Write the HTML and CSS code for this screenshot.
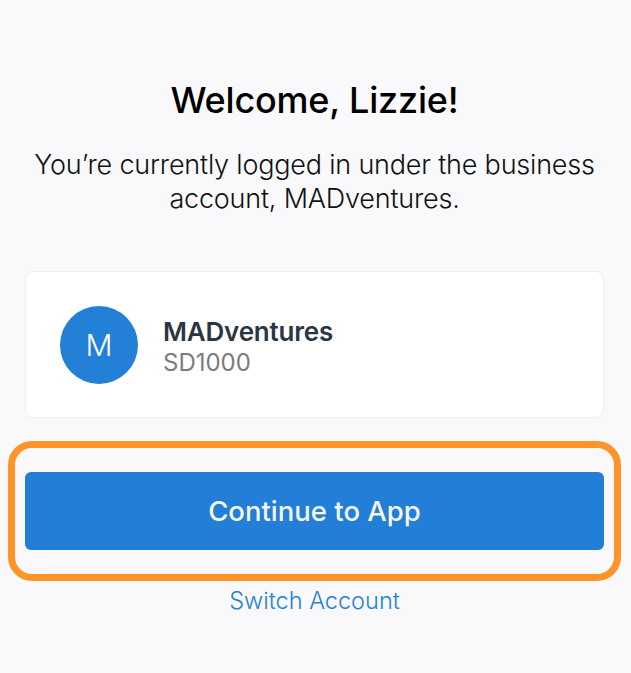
FILE: index.html
```html
<!DOCTYPE html>
<html>
    <head>
        <title>Welcome</title>
        <meta charset="utf-8" />
        <meta name="viewport" content="width=device-width, initial-scale=1" />
        <link rel="stylesheet" href="styles.css">
    </head>
    <body>
        <div class="screen">
            <h1 class="title">Welcome, Lizzie!</h1>
            <p class="intro">
                You’re currently logged in under the business account, MADventures.
            </p>
            <div class="account-card">
                <div class="avatar">M</div>
                <div class="account-info">
                    <div class="account-name">MADventures</div>
                    <div class="account-id">SD1000</div>
                </div>
            </div>
            <div class="highlight">
                <button class="primary-btn">Continue to App</button>
            </div>
            <a class="switch-link" href="#">Switch Account</a>
        </div>
    </body>
</html>
```

FILE: styles.css
```css
html,
body {
    margin: 0;
    padding: 0;
    background-color: #f9f9fb;
    font-family: Inter, 'Liberation Sans', Arial, sans-serif;
}

.screen {
    padding: 78px 27px 0 25px;
    display: flex;
    flex-direction: column;
}

.title {
    margin: 0;
    text-align: center;
    font-size: 36px;
    font-weight: 500;
    color: #000;
    letter-spacing: -0.2px;
}

.intro {
    margin: 26px 0 0;
    text-align: center;
    font-size: 27px;
    font-weight: 300;
    line-height: 34px;
    color: #111;
    letter-spacing: -0.2px;
}

.account-card {
    margin-top: 55px;
    height: 145px;
    background-color: #fff;
    border: 1px solid #eeeef2;
    border-radius: 8px;
    display: flex;
    align-items: center;
    padding-left: 34px;
    gap: 25px;
}

.avatar {
    width: 78px;
    height: 78px;
    border-radius: 50%;
    background-color: #2380d7;
    color: #fff;
    font-size: 30px;
    font-weight: 300;
    display: flex;
    align-items: center;
    justify-content: center;
}

.account-info {
    margin-top: 4px;
}

.account-name {
    font-size: 26px;
    font-weight: 600;
    color: #2b3645;
    letter-spacing: -0.2px;
}

.account-id {
    margin-top: 1px;
    font-size: 24px;
    color: #7b7b80;
}

.highlight {
    margin: 23px -17px 0 -17px;
    border: 7px solid #fd9427;
    border-radius: 24px;
    padding: 24px 10px;
}

.primary-btn {
    display: block;
    width: 100%;
    height: 78px;
    border: none;
    border-radius: 6px;
    background-color: #227ed6;
    color: #f4f7fb;
    font-family: inherit;
    font-size: 27.5px;
    font-weight: 500;
}

.switch-link {
    margin-top: 5px;
    text-align: center;
    font-size: 23.5px;
    font-weight: 300;
    color: #2381d8;
    text-decoration: none;
}
```
